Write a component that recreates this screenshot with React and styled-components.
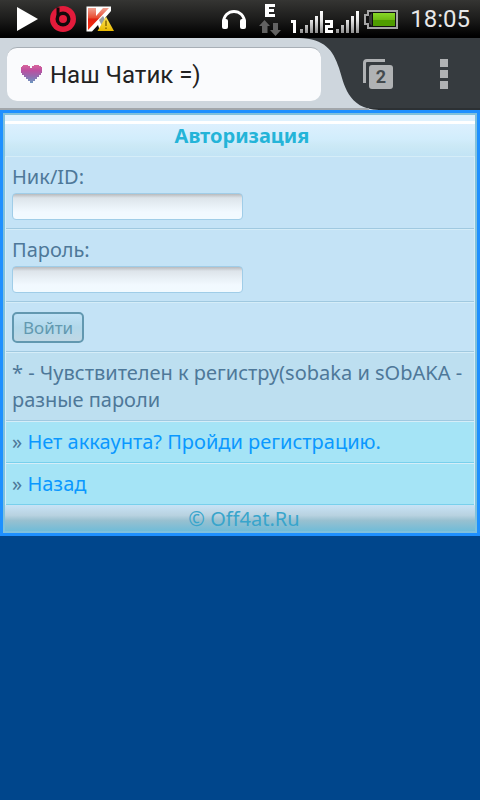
import React, { useState } from "react";
import styled, { createGlobalStyle, css } from "styled-components";

const GlobalStyle = createGlobalStyle`
  * {
    box-sizing: border-box;
  }
  body {
    margin: 0;
    background: #00468c;
    font-family: "Noto Sans", "Open Sans", sans-serif;
  }
`;

const App = () => {
  const [nick, setNick] = useState("");
  const [password, setPassword] = useState("");

  return (
    <>
      <GlobalStyle />
      <StatusBar>
        <NotificationIcons />
        <SystemIcons />
        <Clock>18:05</Clock>
      </StatusBar>
      <Browser>
        <AddressArea>
          <AddressBar>
            <HeartIcon />
            <PageTitle>Наш Чатик =)</PageTitle>
          </AddressBar>
        </AddressArea>
        <TabCurve />
        <Actions>
          <IconButton aria-label="Вкладки">
            <TabsIcon />
          </IconButton>
          <IconButton aria-label="Меню">
            <MenuIcon />
          </IconButton>
        </Actions>
      </Browser>
      <Page>
        <Header>Авторизация</Header>
        <form onSubmit={(e) => e.preventDefault()}>
          <Row>
            <Label htmlFor="nick">Ник/ID:</Label>
            <Input
              id="nick"
              type="text"
              value={nick}
              onChange={(e) => setNick(e.target.value)}
            />
          </Row>
          <Row>
            <Label htmlFor="password">Пароль:</Label>
            <Input
              id="password"
              type="password"
              value={password}
              onChange={(e) => setPassword(e.target.value)}
            />
          </Row>
          <Row $submit>
            <Button type="submit">Войти</Button>
          </Row>
        </form>
        <Row $note>* - Чувствителен к регистру(sobaka и sObAKA - разные пароли</Row>
        <Row $link>
          » <Link href="#register">Нет аккаунта? Пройди регистрацию.</Link>
        </Row>
        <Row $link>
          » <Link href="#back">Назад</Link>
        </Row>
        <Footer>
          <FooterLink href="#home">© Off4at.Ru</FooterLink>
        </Footer>
      </Page>
    </>
  );
};

const NotificationIcons = () => (
  <svg width="116" height="38" viewBox="0 0 116 38" aria-hidden="true">
    <defs>
      <linearGradient id="red" x1="0" y1="0" x2="0" y2="1">
        <stop offset="0" stopColor="#f0a090" />
        <stop offset="0.45" stopColor="#e84a30" />
        <stop offset="0.5" stopColor="#e02010" />
        <stop offset="1" stopColor="#ff3010" />
      </linearGradient>
      <linearGradient id="warn" x1="0" y1="0" x2="0" y2="1">
        <stop offset="0" stopColor="#ffe860" />
        <stop offset="1" stopColor="#e8b800" />
      </linearGradient>
    </defs>
    <path d="M17 7 L38 19 L17 31 Z" fill="#fff" />
    <circle cx="63" cy="19" r="13" fill="#e31b3b" />
    <path d="M58 7.500 V19" stroke="#120a0b" strokeWidth="3" />
    <circle cx="63" cy="19" r="7.500" fill="#120a0b" />
    <circle cx="63" cy="19" r="4" fill="#e31b3b" />
    <path d="M86.500 6.500 H111 V11 L105 18 L111 31 H100 L98 25 L92 31.500 H86.500 Z" fill="#fff" />
    <path d="M88 8 H96 V16 L103 8 H109 L88 30 Z" fill="url(#red)" />
    <path d="M99 20 L103 16 L111 30 H104 Z" fill="#99a0a4" />
    <path d="M106 16.500 L114 31 H97.500 Z" fill="url(#warn)" />
    <path d="M106 20.500 V26 M106 27.500 V29" stroke="#8a6a00" strokeWidth="1.500" />
  </svg>
);

const bars = [
  [300, 4],
  [305, 8],
  [310, 13],
  [315, 17],
  [320, 22],
  [336, 4],
  [341, 8],
  [346, 13],
  [351, 17],
  [356, 22],
];

const SystemIcons = () => (
  <svg width="180" height="38" viewBox="220 0 180 38" aria-hidden="true">
    <defs>
      <linearGradient id="bar" gradientUnits="userSpaceOnUse" x1="0" y1="11" x2="0" y2="33">
        <stop offset="0" stopColor="#fff" />
        <stop offset="0.4" stopColor="#e8e8e8" />
        <stop offset="1" stopColor="#909090" />
      </linearGradient>
      <linearGradient id="charge" x1="0" y1="0" x2="0" y2="1">
        <stop offset="0" stopColor="#88d828" />
        <stop offset="0.5" stopColor="#70bc14" />
        <stop offset="0.55" stopColor="#4f9c00" />
        <stop offset="1" stopColor="#4f9c00" />
      </linearGradient>
    </defs>
    <path d="M223.500 23 C223.500 7.500 244.500 7.500 244.500 23" fill="none" stroke="#fff" strokeWidth="3" />
    <rect x="222" y="19" width="6" height="10" rx="2" fill="#fff" />
    <rect x="240" y="19" width="6" height="10" rx="2" fill="#fff" />
    <path d="M265 4 H275 V7 H269 V9 H274 V12 H269 V14 H275 V17 H265 Z" fill="#fff" />
    <path d="M264.500 20 L270 26 H267.500 V33 H262 V26 H259 Z" fill="#626262" />
    <path d="M275.500 36 L281 30 H278 V23 H273 V30 H270 Z" fill="#626262" />
    {bars.map(([x, height]) => (
      <rect key={x} x={x} y={33 - height} width="3" height={height} fill="url(#bar)" />
    ))}
    <path d="M291 20 H296 V33 H293 V23 H291 Z" fill="#fff" />
    <path d="M325 20 H333 V28 H328 V30 H333 V33 H325 V25 H330 V23 H325 Z" fill="#fff" />
    <path d="M368 11 H397 V28 H368 V24 H365 V15 H368 Z" fill="#111" stroke="#a5a5a5" strokeWidth="2" />
    <path d="M369 16 L372 13 V26 L369 23 Z" fill="#3c3c3c" />
    <rect x="373" y="13" width="22" height="13" fill="url(#charge)" />
  </svg>
);

const HeartIcon = () => (
  <svg width="22" height="20" viewBox="0 0 22 20" aria-hidden="true">
    <defs>
      <linearGradient id="heart" x1="0" y1="0" x2="0" y2="1">
        <stop offset="0" stopColor="#d8649c" />
        <stop offset="0.3" stopColor="#bd509f" />
        <stop offset="0.6" stopColor="#9868ae" />
        <stop offset="1" stopColor="#6a98c0" />
      </linearGradient>
    </defs>
    <path
      d="M3 0 H8 V1 H10 V3 H12 V1 H14 V0 H19 V1 H21 V2 H22 V8 H21 V10 H19 V12 H17 V14 H15 V16 H13 V18 H10 V16 H8 V14 H6 V12 H4 V10 H2 V8 H1 V2 H2 V1 H3 Z"
      fill="url(#heart)"
    />
  </svg>
);

const TabCurve = () => (
  <CurveSvg viewBox="0 0 84 72" aria-hidden="true">
    <path d="M0 0 H4 C30 1 38 12 44 30 C49 45 52 71 84 72 H0 Z" fill="#ced6dd" />
    <path d="M0 71 H74" stroke="#a2a6aa" strokeWidth="2" />
  </CurveSvg>
);

const TabsIcon = () => (
  <svg width="30" height="30" viewBox="0 0 30 30" aria-hidden="true">
    <path d="M1.500 24 V4 Q1.500 1.500 4 1.500 H22" fill="none" stroke="#b0b2b4" strokeWidth="3" />
    <rect x="6" y="6" width="24" height="24" rx="3" fill="#b0b2b4" />
    <text
      x="18"
      y="24"
      textAnchor="middle"
      fontFamily="Roboto, sans-serif"
      fontSize="18"
      fontWeight="700"
      fill="#444a4e"
    >
      2
    </text>
  </svg>
);

const MenuIcon = () => (
  <svg width="8" height="30" viewBox="0 0 8 30" aria-hidden="true">
    <path d="M0 0 H8 V8 H0 Z M0 11 H8 V19 H0 Z M0 22 H8 V30 H0 Z" fill="#b0b2b4" />
  </svg>
);

const StatusBar = styled.div`
  display: flex;
  align-items: center;
  height: 38px;
  padding-right: 10px;
  background: linear-gradient(#353533, #1c1c1b 50%, #000 95%);

  svg:nth-child(2) {
    margin-left: auto;
  }
`;

const Clock = styled.time`
  width: 70px;
  text-align: right;
  font: 24px/38px Roboto, sans-serif;
  color: #e8e8e8;
`;

const Browser = styled.div`
  display: flex;
  height: 72px;
  background: #363b3f;
  box-shadow: inset 0 -2px #2c3033;
`;

const AddressArea = styled.div`
  flex: 1;
  padding: 9px 0 9px 7px;
  background: #ced6dd;
  box-shadow: inset 0 -2px #a2a6aa;
`;

/* the bar reaches over the start of the tab curve */
const AddressBar = styled.div`
  position: relative;
  z-index: 1;
  display: flex;
  align-items: center;
  gap: 8px;
  height: 54px;
  margin-right: -26px;
  padding-left: 13px;
  border-top: 1px solid #a8afb6;
  border-radius: 10px;
  background: #fafbfd;
`;

const PageTitle = styled.span`
  font: 24px/30px Roboto, sans-serif;
  color: #222;
`;

const CurveSvg = styled.svg`
  flex: none;
  width: 84px;
  height: 72px;
  margin-right: -34px;
`;

const Actions = styled.div`
  display: flex;
  align-items: center;
  padding-right: 3px;
`;

const IconButton = styled.button`
  display: flex;
  align-items: center;
  justify-content: center;
  width: 66px;
  height: 72px;
  padding: 0;
  border: 0;
  background: none;
`;

const Page = styled.main`
  border: 3px solid #1e90ff;
  outline: 2px solid #80c1dc;
  outline-offset: -5px;
  padding: 2px;
  background: #c4e3f6;
  font-size: 20px;
  line-height: 27px;
  color: #4e7899;
`;

const Header = styled.h1`
  margin: 0;
  padding: 7px 0 7px 4px;
  background: linear-gradient(
    #def1fd 6px,
    #fff 6px,
    #fff 9px,
    #dcf0fe 9px,
    #d2edfc 24px,
    #cce9f6 30px,
    #c2e4f5
  );
  text-align: center;
  font-size: 20px;
  font-weight: 700;
  line-height: 27px;
  color: #24b4d8;
`;

const Row = styled.div`
  padding: 6px 6px 8px;
  border: 1px solid #d5edf8;
  border-width: 1px 1px 0 1px;
  background: #c4e3f6;
  box-shadow: inset 0 -1px #a0c9e0;

  ${(props) =>
    props.$submit &&
    css`
      padding: 9px 6px;
    `}
  ${(props) =>
    props.$note &&
    css`
      background: #bddff0;
    `}
  ${(props) =>
    props.$link &&
    css`
      background: #a5e4f6;
      box-shadow: inset 0 -1px #78d0ec;
    `}
`;

const Label = styled.label`
  display: block;
`;

const Input = styled.input`
  display: block;
  width: 231px;
  height: 27px;
  margin: 3px 0 1px;
  padding: 0 6px;
  border: 1px solid #a0cde8;
  border-radius: 4px;
  background: linear-gradient(#b8babd, #dde4ea 4px, #e9f1f7 12px, #f2f9ff 18px, #f2faff);
  font: inherit;
  color: inherit;
`;

const Button = styled.button`
  display: block;
  height: 31px;
  padding: 0 9px;
  border: 2px solid #6298b0;
  border-radius: 5px;
  background: linear-gradient(#c0e2f6, #b2d8ea 50%, #c0d8e5);
  font: 17px/24px "Noto Sans", "Open Sans", sans-serif;
  color: #6299b0;
`;

const Link = styled.a`
  color: #0a98ff;
  text-decoration: none;
`;

const Footer = styled.footer`
  height: 26px;
  padding-left: 8px;
  background: linear-gradient(#c8e3f6, #b8d2e0 40%, #98c0d0 60%, #70bcd8);
  text-align: center;
`;

const FooterLink = styled(Link)`
  color: #38a5cc;
`;

export default App;
